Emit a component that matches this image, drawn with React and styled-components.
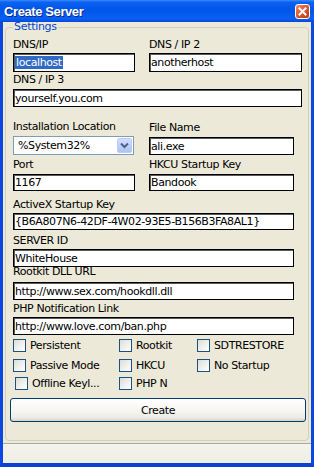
import React from 'react'
import styled, { createGlobalStyle } from 'styled-components'

const Global = createGlobalStyle`
  html, body {
    margin: 0;
    padding: 0;
    background: #ffffff;
  }
  body {
    font-family: "DejaVu Sans", Verdana, sans-serif;
  }
`

const Window = styled.div`
  width: 314px;
  height: 467px;
  display: flex;
  flex-direction: column;
  box-sizing: border-box;
`

const TitleBar = styled.div`
  height: 22px;
  flex: none;
  display: flex;
  align-items: center;
  justify-content: space-between;
  padding: 0 4px 0 4px;
  background: linear-gradient(
    180deg,
    #3a8cff 0%,
    #0c62f0 10%,
    #0055ea 45%,
    #0a60f2 85%,
    #0349da 100%
  );
`

const Title = styled.span`
  font-family: "Liberation Sans", Arial, sans-serif;
  font-weight: bold;
  font-size: 13px;
  letter-spacing: -0.4px;
  color: #ffffff;
  text-shadow: 1px 1px 0 #0a2a8c;
  margin-top: 1px;
`

const CloseButton = styled.div`
  width: 15px;
  height: 15px;
  box-sizing: border-box;
  border: 1px solid #ffffff;
  border-radius: 3px;
  background: linear-gradient(135deg, #f0906d 0%, #dc5a34 45%, #c13a14 100%);
  display: flex;
  align-items: center;
  justify-content: center;
`

const Frame = styled.div`
  flex: 1;
  display: flex;
  flex-direction: column;
  background: #ece9d8;
  border-left: 3px solid #0b47e0;
  border-right: 3px solid #0b47e0;
  border-bottom: 4px solid #0b40d8;
  min-height: 0;
`

const Group = styled.fieldset`
  flex: 1;
  margin: 0 2px 2px 2px;
  padding: 7px 7px 0 7px;
  border: 1px solid #d0d0bf;
  border-radius: 4px;
  min-width: 0;
`

const Legend = styled.legend`
  font-size: 11px;
  line-height: 10px;
  letter-spacing: -0.3px;
  color: #0046d5;
  padding: 0 1px;
`

const Row = styled.div`
  display: grid;
  grid-template-columns: ${p => p.$cols || '1fr'};
  column-gap: 14px;
  align-items: end;
  margin-top: ${p => p.$top || 0}px;
`

const Field = styled.div`
  display: flex;
  flex-direction: column;
`

const Label = styled.label`
  font-size: 11px;
  line-height: 12px;
  letter-spacing: -0.4px;
  color: #000000;
  margin-bottom: ${p => (p.$gap === undefined ? 2 : p.$gap)}px;
  white-space: nowrap;
`

const TextBox = styled.div`
  box-sizing: border-box;
  width: ${p => p.$w}px;
  height: ${p => p.$h || 18}px;
  border: 1px solid #000000;
  box-shadow: inset 1px 1px 0 #5a5a5a;
  background: #ffffff;
  padding: 0 1px;
  display: flex;
  align-items: center;
  font-size: 11px;
  letter-spacing: -0.4px;
  color: #000000;
  white-space: nowrap;
  overflow: hidden;
`

const Selected = styled.span`
  background: #316ac5;
  color: #ffffff;
  padding: 0 1px 0 1px;
  line-height: 13px;
`

const Combo = styled.div`
  box-sizing: border-box;
  width: 121px;
  height: 19px;
  border: 1px solid #7f9db9;
  background: #ffffff;
  display: flex;
  align-items: center;
  justify-content: space-between;
  padding: 0 1px 0 4px;
  font-size: 11px;
  letter-spacing: -0.4px;
`

const DropButton = styled.div`
  width: 15px;
  height: 15px;
  box-sizing: border-box;
  border: 1px solid #b9cdf7;
  border-radius: 2px;
  background: linear-gradient(180deg, #d2defc 0%, #bccdf8 60%, #aec3f4 100%);
  display: flex;
  align-items: center;
  justify-content: center;
`

const CheckRow = styled.div`
  display: grid;
  grid-template-columns: 106px 78px 1fr;
  margin-top: ${p => p.$top || 0}px;
`

const CheckItem = styled.div`
  display: flex;
  align-items: center;
  gap: 4px;
  margin-left: ${p => p.$indent || 0}px;
  font-size: 11px;
  letter-spacing: -0.4px;
  line-height: 13px;
  color: #000000;
  white-space: nowrap;
`

const Box = styled.span`
  width: 13px;
  height: 13px;
  box-sizing: border-box;
  flex: none;
  border: 1px solid #1c5180;
  background: linear-gradient(135deg, #dcdcd7 0%, #f2f2ef 60%, #ffffff 100%);
`

const CreateButton = styled.div`
  box-sizing: border-box;
  margin: 8px 0 0 -3px;
  width: 296px;
  height: 24px;
  border: 1px solid #003c74;
  border-radius: 3px;
  background: linear-gradient(180deg, #ffffff 0%, #f6f5f0 55%, #ecebe4 85%, #d8d3c6 100%);
  display: flex;
  align-items: center;
  justify-content: center;
  font-size: 11px;
  letter-spacing: -0.4px;
  color: #000000;
`

const StatusBar = styled.div`
  height: 20px;
  flex: none;
  box-sizing: border-box;
  border-top: 1px solid #aca899;
  background: linear-gradient(180deg, #f4f3ec 0%, #efeee4 100%);
`

function Check({ label, indent }) {
  return (
    <CheckItem $indent={indent}>
      <Box />
      <span>{label}</span>
    </CheckItem>
  )
}

export default function App() {
  return (
    <>
      <Global />
      <Window>
        <TitleBar>
          <Title>Create Server</Title>
          <CloseButton>
            <svg width="9" height="9" viewBox="0 0 9 9">
              <path d="M1.5 1.5 L7.5 7.5 M7.5 1.5 L1.5 7.5" stroke="#ffffff" strokeWidth="2" strokeLinecap="square" />
            </svg>
          </CloseButton>
        </TitleBar>

        <Frame>
          <Group>
            <Legend>Settings</Legend>

            <Row $cols="122px 153px">
              <Field>
                <Label>DNS/IP</Label>
                <TextBox $w={122} $h={19}><Selected>localhost</Selected></TextBox>
              </Field>
              <Field>
                <Label>DNS / IP 2</Label>
                <TextBox $w={153} $h={19}>anotherhost</TextBox>
              </Field>
            </Row>

            <Row $top={2}>
              <Field>
                <Label $gap={3}>DNS / IP 3</Label>
                <TextBox $w={289}>yourself.you.com</TextBox>
              </Field>
            </Row>

            <Row $cols="122px 145px" $top={14}>
              <Field>
                <Label $gap={3}>Installation Location</Label>
                <Combo>
                  <span>%System32%</span>
                  <DropButton>
                    <svg width="9" height="7" viewBox="0 0 9 7">
                      <path d="M1 1.5 L4.5 5 L8 1.5" fill="none" stroke="#4d6185" strokeWidth="2" />
                    </svg>
                  </DropButton>
                </Combo>
              </Field>
              <Field>
                <Label $gap={3}>File Name</Label>
                <TextBox $w={145}>ali.exe</TextBox>
              </Field>
            </Row>

            <Row $cols="122px 145px" $top={4}>
              <Field>
                <Label $gap={3}>Port</Label>
                <TextBox $w={122} $h={17}>1167</TextBox>
              </Field>
              <Field>
                <Label $gap={3}>HKCU Startup Key</Label>
                <TextBox $w={145} $h={17}>Bandook</TextBox>
              </Field>
            </Row>

            <Row $top={8}>
              <Field>
                <Label>ActiveX Startup Key</Label>
                <TextBox $w={281} $h={17}>{'{B6A807N6-42DF-4W02-93E5-B156B3FA8AL1}'}</TextBox>
              </Field>
            </Row>

            <Row $top={5}>
              <Field>
                <Label>SERVER ID</Label>
                <TextBox $w={281}>WhiteHouse</TextBox>
              </Field>
            </Row>

            <Row $top={-1}>
              <Field>
                <Label $gap={4}>Rootkit DLL URL</Label>
                <TextBox $w={281}>http://www.sex.com/hookdll.dll</TextBox>
              </Field>
            </Row>

            <Row $top={3}>
              <Field>
                <Label>PHP Notification Link</Label>
                <TextBox $w={281}>http://www.love.com/ban.php</TextBox>
              </Field>
            </Row>

            <CheckRow $top={4}>
              <Check label="Persistent" />
              <Check label="Rootkit" />
              <Check label="SDTRESTORE" />
            </CheckRow>
            <CheckRow $top={7}>
              <Check label="Passive Mode" />
              <Check label="HKCU" />
              <Check label="No Startup" />
            </CheckRow>
            <CheckRow $top={5}>
              <Check label="Offline Keyl..." indent={2} />
              <Check label="PHP N" />
            </CheckRow>

            <CreateButton>Create</CreateButton>
          </Group>
          <StatusBar />
        </Frame>
      </Window>
    </>
  )
}
